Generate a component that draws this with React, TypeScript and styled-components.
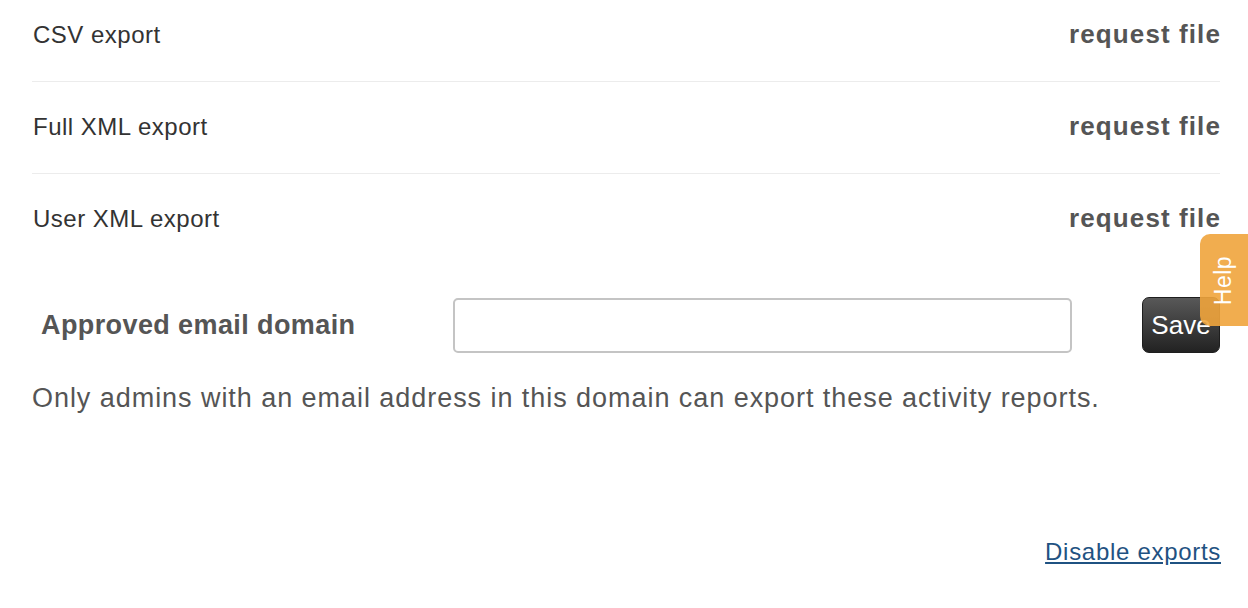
import { createGlobalStyle, styled } from "styled-components";

const exportsList = ["CSV export", "Full XML export", "User XML export"];

const GlobalStyle = createGlobalStyle`
  html, body {
    margin: 0;
    padding: 0;
    background: #fff;
    font-family: "Liberation Sans", Arial, Helvetica, sans-serif;
  }
`;

const App = () => {
  return (
    <>
      <GlobalStyle />
      <Page>
        <ExportList>
          {exportsList.map((item) => (
            <ExportRow key={item}>
              <ExportName>{item}</ExportName>
              <RequestLink href="#">request file</RequestLink>
            </ExportRow>
          ))}
        </ExportList>
        <DomainForm onSubmit={(e) => e.preventDefault()}>
          <DomainLabel htmlFor="domain">Approved email domain</DomainLabel>
          <DomainInput id="domain" name="domain" type="text" />
          <SaveButton type="submit">Save</SaveButton>
        </DomainForm>
        <Note>
          Only admins with an email address in this domain can export these
          activity reports.
        </Note>
        <Footer>
          <DisableLink href="#">Disable exports</DisableLink>
        </Footer>
      </Page>
      <HelpTab>
        <span>Help</span>
      </HelpTab>
    </>
  );
};

export default App;

const Page = styled.div`
  width: 1248px;
  height: 608px;
  box-sizing: border-box;
  padding: 0 28px 0 32px;
  overflow: hidden;
`;

const ExportList = styled.div`
  display: flex;
  flex-direction: column;
`;

const ExportRow = styled.div`
  display: flex;
  justify-content: space-between;
  align-items: baseline;
  height: 92px;
  box-sizing: border-box;
  padding-top: 29px;
  border-bottom: 1px solid #ececec;
  &:first-child {
    height: 82px;
    padding-top: 19px;
  }
  &:last-child {
    border-bottom: none;
  }
`;

const ExportName = styled.span`
  font-size: 24px;
  line-height: 30px;
  color: #333;
  padding-left: 1px;
  letter-spacing: 0.5px;
`;

const RequestLink = styled.a`
  font-size: 26px;
  line-height: 30px;
  font-weight: 700;
  color: #555;
  text-decoration: none;
  letter-spacing: 1.1px;
  margin-right: -1px;
`;

const DomainForm = styled.form`
  display: grid;
  grid-template-columns: 421px 619px 1fr;
  align-items: center;
  margin-top: 31px;
  height: 56px;
`;

const DomainLabel = styled.label`
  padding-left: 9px;
  font-size: 27px;
  font-weight: 700;
  color: #555;
  letter-spacing: 0.4px;
`;

const DomainInput = styled.input`
  box-sizing: border-box;
  height: 55px;
  width: 100%;
  border: 2px solid #c4c4c4;
  border-radius: 5px;
  background: #fff;
  font-size: 22px;
  padding: 0 12px;
  outline: none;
`;

const SaveButton = styled.button`
  justify-self: end;
  width: 78px;
  height: 56px;
  border: 1px solid #1e1e1e;
  border-radius: 7px;
  background: linear-gradient(#585858, #222);
  color: #fff;
  font-family: "Liberation Sans", Arial, sans-serif;
  font-size: 26px;
  padding: 0;
  cursor: pointer;
`;

const Note = styled.p`
  margin: 28px 0 0;
  font-size: 27px;
  line-height: 34px;
  color: #555;
  letter-spacing: 0.95px;
`;

const Footer = styled.div`
  display: flex;
  justify-content: flex-end;
  margin-top: 122px;
`;

const DisableLink = styled.a`
  font-size: 24px;
  line-height: 30px;
  color: #1f5282;
  text-decoration: underline;
  letter-spacing: 0.7px;
  margin-right: -1px;
`;

const HelpTab = styled.div`
  position: absolute;
  top: 234px;
  right: 0;
  width: 48px;
  height: 92px;
  border-radius: 10px 0 0 10px;
  background: rgba(240, 164, 60, 0.9);
  display: flex;
  align-items: center;
  justify-content: center;
  & > span {
    transform: rotate(-90deg);
    color: #fff;
    font-size: 23px;
    letter-spacing: 0.5px;
  }
`;
